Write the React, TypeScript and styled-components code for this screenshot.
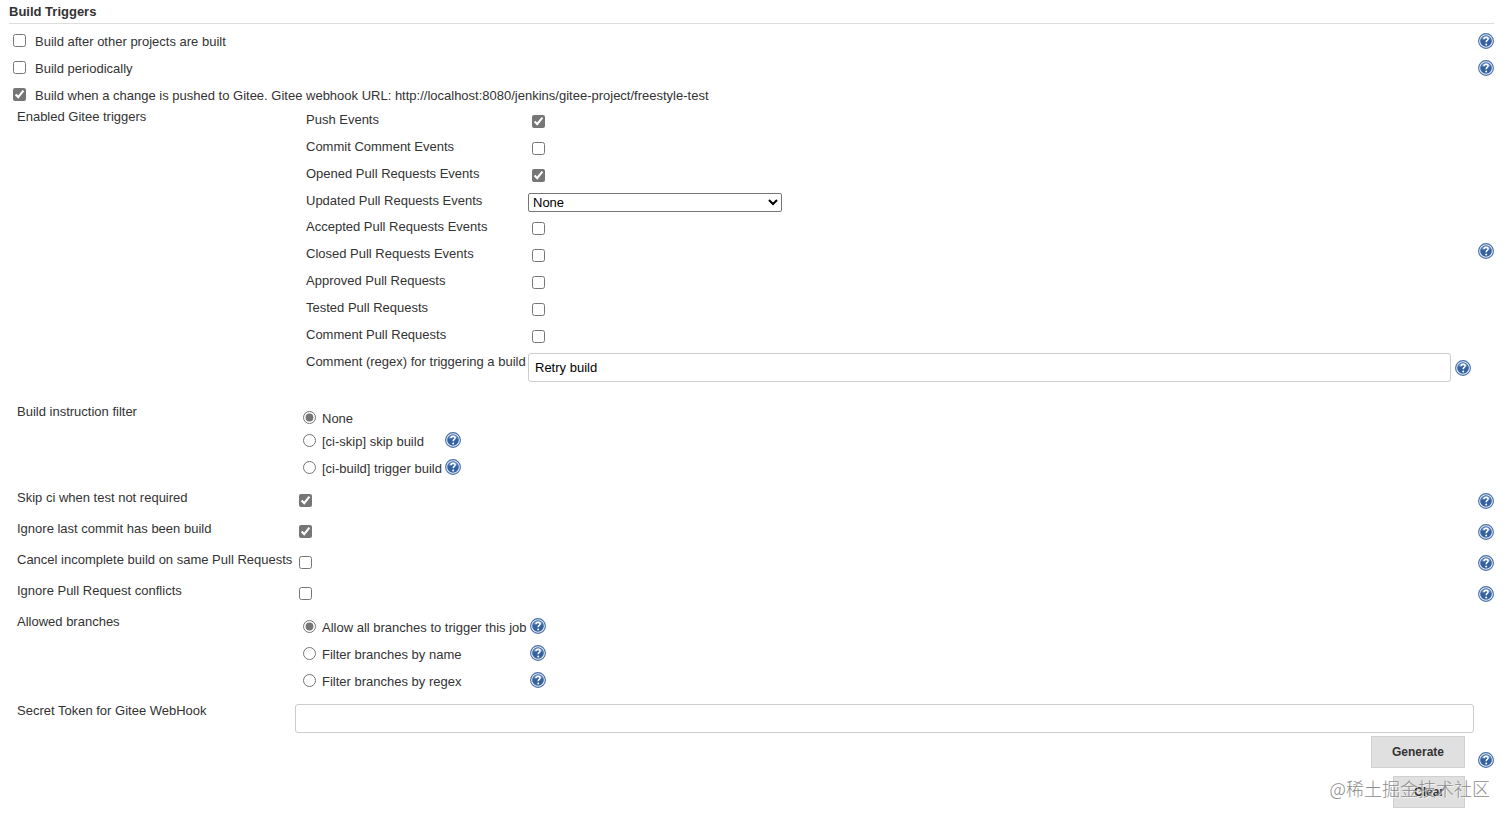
import React, { useId } from "react";
import styled, { createGlobalStyle } from "styled-components";

const GlobalStyle = createGlobalStyle`
  *, *::before, *::after { box-sizing: border-box; }
  body {
    margin: 0;
    background: #fff;
    color: #333;
    font-family: "Liberation Sans", Arial, "Noto Sans CJK SC", sans-serif;
    font-size: 13px;
    line-height: 18px;
  }
`;

const Page = styled.main`
  padding: 0 18px 0 9px;
`;

const Heading = styled.h1`
  margin: 0 0 3px;
  border-bottom: 1px solid #ddd;
  font-size: 13px;
  line-height: 23px;
  font-weight: bold;
`;

const OptionRow = styled.div`
  display: flex;
  align-items: center;
  justify-content: space-between;
  height: 27px;
`;

const OptionLabel = styled.label`
  display: flex;
  align-items: center;
  gap: 9px;
  padding: 2px 0 0 4px;
`;

const Tick = styled.input.attrs({ type: "checkbox" })<{ $raised?: boolean }>`
  width: 13px;
  height: 13px;
  margin: ${(p) => (p.$raised ? "0 0 3px" : "0")};
  accent-color: #767676;
`;

const Radio = styled.input.attrs({ type: "radio" })`
  width: 13px;
  height: 13px;
  margin: 0 0 3px;
  accent-color: #767676;
`;

const HelpLink = styled.a`
  display: block;
  flex: none;
  width: 16px;
  height: 16px;
`;

const Section = styled.section`
  display: grid;
  grid-template-columns: 278px minmax(0, 1fr) 20px;
  padding-left: 8px;

  & > ${HelpLink} {
    align-self: center;
    justify-self: end;
  }
`;

const TriggerSection = styled(Section)`
  margin-bottom: 5px;
`;

const FlagSection = styled(Section)`
  height: 31px;
  align-items: center;
`;

const Caption = styled.div<{ $top?: number }>`
  align-self: start;
  padding-top: ${(p) => p.$top ?? 4}px;
  white-space: nowrap;
`;

const FlagTick = styled.div`
  display: flex;
  padding-left: 4px;
`;

const TriggerList = styled.div`
  padding: 0 3px 12px 11px;
`;

const TriggerRow = styled.div<{ $height?: number }>`
  display: grid;
  grid-template-columns: 222px minmax(0, 1fr);
  align-items: center;
  min-height: ${(p) => p.$height ?? 27}px;
`;

const TriggerControl = styled.div`
  display: flex;
  padding-left: 4px;
`;

const Select = styled.select`
  width: 254px;
  height: 19px;
  padding: 0;
  border: 1px solid #767676;
  border-radius: 2px;
  background-color: #fff;
  color: #000;
  font: 13px "Liberation Sans", Arial, sans-serif;
`;

const TextInput = styled.input.attrs({ type: "text" })`
  display: block;
  flex: 1;
  width: 100%;
  min-width: 0;
  height: 29px;
  padding: 0 6px;
  border: 1px solid #ccc;
  border-radius: 3px;
  background: #fff;
  color: #000;
  font: 13px "Liberation Sans", Arial, sans-serif;
`;

const CommentField = styled.div`
  display: flex;
  align-items: center;
  gap: 4px;
  padding-top: 3px;
`;

const RadioGroup = styled.div`
  display: grid;
  grid-template-columns: max-content 16px;
  grid-auto-rows: minmax(24px, auto);
  column-gap: 3px;
  align-items: center;
  padding: 5px 0 3px 8px;

  & > ${HelpLink} {
    margin-bottom: 3px;
  }
`;

const RadioLabel = styled.label<{ $compact?: boolean }>`
  grid-column: 1;
  display: flex;
  align-items: center;
  gap: 6px;
  height: ${(p) => (p.$compact ? 24 : 27)}px;
  padding-top: ${(p) => (p.$compact ? 5 : 0)}px;
`;

const TokenField = styled.div`
  display: flex;
  flex-direction: column;
  align-items: flex-end;
  padding: 6px 0 14px;

  & > ${TextInput} {
    flex: none;
  }
`;

const Actions = styled.div`
  position: relative;
  display: flex;
  flex-direction: column;
  align-items: flex-end;
  gap: 8px;
  padding: 3px 9px 0 0;
`;

const Button = styled.button`
  height: 32px;
  padding: 0 20px;
  border: 1px solid #d0d0d0;
  background: #e0e0e0;
  color: #333;
  font: bold 12px "Liberation Sans", Arial, sans-serif;
`;

const Watermark = styled.span`
  position: absolute;
  right: -16px;
  bottom: 8px;
  color: #8c8c8c;
  font-family: "Noto Sans CJK SC", sans-serif;
  font-weight: 300;
  font-size: 18px;
  line-height: 24px;
  white-space: nowrap;
  pointer-events: none;
  text-shadow: 1px 1px 0 rgba(255, 255, 255, 0.7);
`;

function Help({ topic }: { topic: string }) {
  return (
    <HelpLink href="#help" aria-label={`Help for ${topic}`}>
      <svg width="16" height="16" viewBox="0 0 16 16" aria-hidden="true">
        <circle cx="8" cy="8" r="7.4" fill="#e6eef8" stroke="#4a6fa8" strokeWidth="1.1" />
        <circle cx="8" cy="8" r="5.8" fill="#34619f" />
        <path d="M3.2 6.4a5.1 5.1 0 0 1 9.6 0Q8 5.6 3.2 6.4Z" fill="#6f94c6" />
        <path
          d="M6 6.3C6 4.9 6.9 4.3 8.1 4.3C9.3 4.3 10.1 5 10.1 6C10.1 7.5 8.2 7.4 8.2 9.2"
          fill="none"
          stroke="#fff"
          strokeWidth="1.5"
        />
        <circle cx="8.2" cy="11.4" r="1" fill="#fff" />
      </svg>
    </HelpLink>
  );
}

function BuildOption({ text, checked, help }: { text: string; checked?: boolean; help?: boolean }) {
  return (
    <OptionRow>
      <OptionLabel>
        <Tick $raised defaultChecked={checked} />
        {text}
      </OptionLabel>
      {help && <Help topic={text} />}
    </OptionRow>
  );
}

function EventTrigger({ text, checked }: { text: string; checked?: boolean }) {
  const id = useId();
  return (
    <TriggerRow>
      <Caption as="label" htmlFor={id} $top={3}>{text}</Caption>
      <TriggerControl>
        <Tick id={id} defaultChecked={checked} />
      </TriggerControl>
    </TriggerRow>
  );
}

function Flag({ text, checked }: { text: string; checked?: boolean }) {
  const id = useId();
  return (
    <FlagSection>
      <Caption as="label" htmlFor={id}>{text}</Caption>
      <FlagTick>
        <Tick id={id} defaultChecked={checked} />
      </FlagTick>
      <Help topic={text} />
    </FlagSection>
  );
}

type Choice = { text: string; help?: boolean; compact?: boolean };

function Choices({ title, name, items }: { title: string; name: string; items: Choice[] }) {
  return (
    <Section>
      <Caption id={name}>{title}</Caption>
      <RadioGroup role="radiogroup" aria-labelledby={name}>
        {items.map((item, i) => (
          <React.Fragment key={item.text}>
            <RadioLabel $compact={item.compact}>
              <Radio name={name} defaultChecked={i === 0} />
              {item.text}
            </RadioLabel>
            {item.help && <Help topic={item.text} />}
          </React.Fragment>
        ))}
      </RadioGroup>
    </Section>
  );
}

export default function App() {
  return (
    <>
      <GlobalStyle />
      <Page>
        <Heading>Build Triggers</Heading>
        <BuildOption text="Build after other projects are built" help />
        <BuildOption text="Build periodically" help />
        <BuildOption
          text="Build when a change is pushed to Gitee. Gitee webhook URL: http://localhost:8080/jenkins/gitee-project/freestyle-test"
          checked
        />

        <TriggerSection>
          <Caption $top={0}>Enabled Gitee triggers</Caption>
          <TriggerList>
            <EventTrigger text="Push Events" checked />
            <EventTrigger text="Commit Comment Events" />
            <EventTrigger text="Opened Pull Requests Events" checked />
            <TriggerRow $height={26}>
              <Caption as="label" htmlFor="updated" $top={3}>Updated Pull Requests Events</Caption>
              <Select id="updated" defaultValue="None">
                <option>None</option>
              </Select>
            </TriggerRow>
            <EventTrigger text="Accepted Pull Requests Events" />
            <EventTrigger text="Closed Pull Requests Events" />
            <EventTrigger text="Approved Pull Requests" />
            <EventTrigger text="Tested Pull Requests" />
            <EventTrigger text="Comment Pull Requests" />
            <TriggerRow>
              <Caption as="label" htmlFor="regex" $top={3}>Comment (regex) for triggering a build</Caption>
              <CommentField>
                <TextInput id="regex" defaultValue="Retry build" />
                <Help topic="comment regex" />
              </CommentField>
            </TriggerRow>
          </TriggerList>
          <Help topic="Enabled Gitee triggers" />
        </TriggerSection>

        <Choices
          title="Build instruction filter"
          name="instruction"
          items={[
            { text: "None", compact: true },
            { text: "[ci-skip] skip build", help: true },
            { text: "[ci-build] trigger build", help: true },
          ]}
        />

        <Flag text="Skip ci when test not required" checked />
        <Flag text="Ignore last commit has been build" checked />
        <Flag text="Cancel incomplete build on same Pull Requests" />
        <Flag text="Ignore Pull Request conflicts" />

        <Choices
          title="Allowed branches"
          name="branches"
          items={[
            { text: "Allow all branches to trigger this job", help: true },
            { text: "Filter branches by name", help: true },
            { text: "Filter branches by regex", help: true },
          ]}
        />

        <Section>
          <Caption as="label" htmlFor="token">Secret Token for Gitee WebHook</Caption>
          <TokenField>
            <TextInput id="token" />
            <Actions>
              <Button type="button">Generate</Button>
              <Button type="button">Clear</Button>
              <Watermark>@稀土掘金技术社区</Watermark>
            </Actions>
          </TokenField>
          <Help topic="Secret Token" />
        </Section>
      </Page>
    </>
  );
}
